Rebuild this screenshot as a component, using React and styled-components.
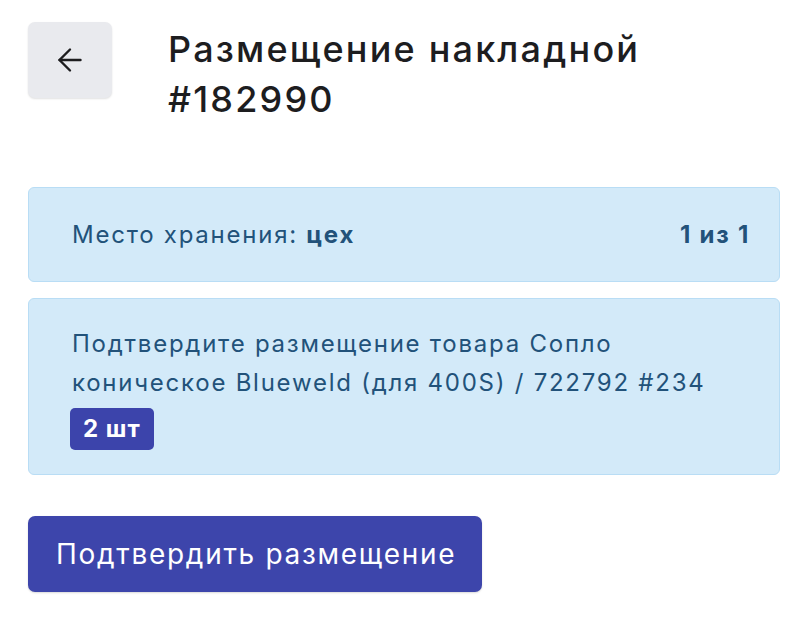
import styled, { createGlobalStyle } from "styled-components";

const Global = createGlobalStyle`
  body {
    margin: 0;
    background: #fff;
    font-family: Inter, "Noto Sans", sans-serif;
  }
`;

const Page = styled.div`
  padding: 22px 24px 28px 28px;
`;

const Header = styled.div`
  display: flex;
  align-items: flex-start;
  gap: 56px;
  margin-bottom: 63px;
`;

const BackButton = styled.button`
  width: 84px;
  height: 76px;
  flex-shrink: 0;
  display: flex;
  align-items: center;
  justify-content: center;
  border: none;
  border-radius: 7px;
  background: #e9eaee;
  box-shadow: 0 1px 2px rgba(0, 0, 0, 0.12);
  color: #1d1d1f;
  cursor: pointer;
`;

const Title = styled.h1`
  margin: 0;
  padding-top: 2px;
  font-size: 36px;
  line-height: 50px;
  font-weight: 500;
  letter-spacing: 2.2px;
  color: #1d1d1f;
`;

const Alert = styled.div`
  display: flex;
  justify-content: space-between;
  align-items: ${p => (p.$center ? "center" : "flex-start")};
  min-height: ${p => p.$height}px;
  box-sizing: border-box;
  padding: ${p => p.$pad};
  margin-bottom: 16px;
  background: #d3eaf9;
  border: 1px solid #b9ddf5;
  border-radius: 6px;
  color: #22527a;
  font-size: 24px;
  letter-spacing: 1.75px;
  line-height: 39px;
`;

const Strong = styled.b`
  font-weight: 700;
`;

const Badge = styled.span`
  display: table;
  margin: 6px 0 0 -2px;
  padding: 0 13px 0 13px;
  background: #3c44ab;
  color: #fff;
  border-radius: 5px;
  font-weight: 700;
  letter-spacing: 1px;
  line-height: 42px;
`;

const Submit = styled.button`
  margin-top: 25px;
  height: 76px;
  padding: 0 26px 0 28px;
  border: none;
  border-radius: 7px;
  background: #3d45ab;
  box-shadow: 0 1px 2px rgba(0, 0, 0, 0.15);
  color: #fff;
  font-family: Inter, "Noto Sans", sans-serif;
  font-size: 28px;
  letter-spacing: 1.7px;
  cursor: pointer;
`;

export default function App() {
  return (
    <Page>
      <Global />
      <Header>
        <BackButton aria-label="Назад">
          <svg width="36" height="36" viewBox="0 0 24 24" fill="none" stroke="currentColor" strokeWidth="1.6" strokeLinecap="round" strokeLinejoin="round">
            <path d="M19 12H5" />
            <path d="M12 19l-7-7 7-7" />
          </svg>
        </BackButton>
        <Title>
          Размещение накладной
          <br />
          #182990
        </Title>
      </Header>
      <Alert $center $height={95} $pad="0 29px 0 43px">
        <span>
          Место хранения: <Strong>цех</Strong>
        </span>
        <Strong>1 из 1</Strong>
      </Alert>
      <Alert $height={176} $pad="25px 29px 24px 43px">
        <div>
          Подтвердите размещение товара Сопло
          <br />
          коническое Blueweld (для 400S) / 722792 #234
          <Badge>2 шт</Badge>
        </div>
      </Alert>
      <Submit>Подтвердить размещение</Submit>
    </Page>
  );
}
